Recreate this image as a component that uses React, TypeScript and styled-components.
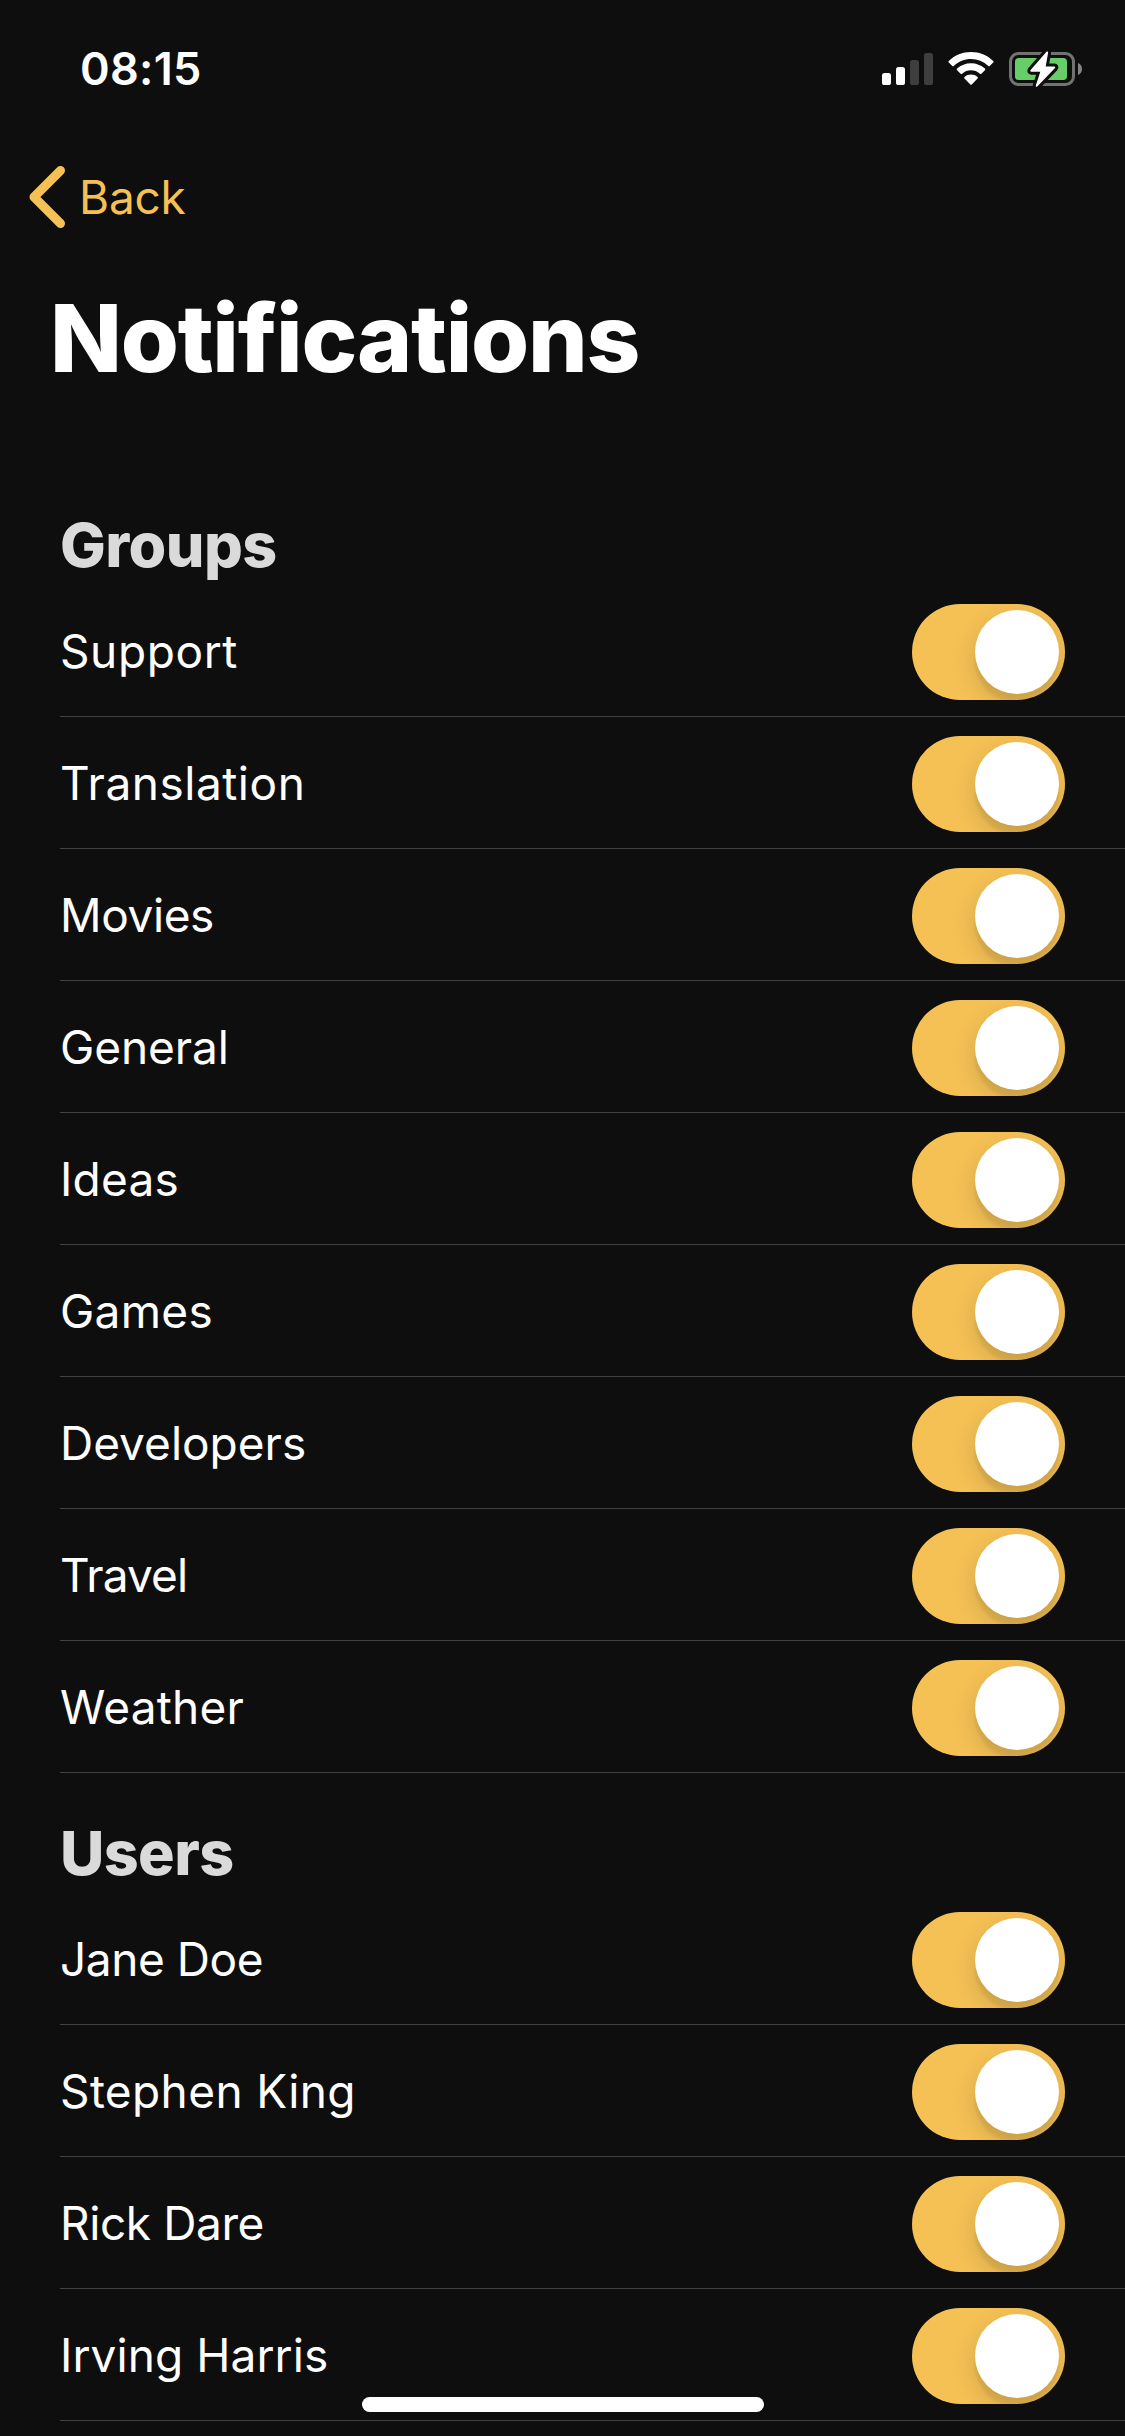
import React from "react";
import styled, { createGlobalStyle } from "styled-components";

const GlobalStyle = createGlobalStyle`
  html, body {
    margin: 0;
    background: #0e0e0e;
  }
  *, *::before, *::after {
    box-sizing: border-box;
  }
`;

const Screen = styled.main`
  position: relative;
  display: flex;
  flex-direction: column;
  width: 1125px;
  height: 2436px;
  overflow: hidden;
  background: #0e0e0e;
  color: #fff;
  font-family: Inter, "Liberation Sans", sans-serif;
`;

const StatusBar = styled.header`
  display: flex;
  flex: none;
  align-items: center;
  justify-content: space-between;
  height: 138px;
  padding: 0 42px 0 80px;
`;

const Clock = styled.time`
  font-size: 45px;
  font-weight: 600;
  line-height: 56px;
  letter-spacing: 0.28px;
`;

const StatusIcons = styled.div`
  display: flex;
  align-items: center;
  gap: 15px;
  height: 36px;
`;

const BackButton = styled.button`
  display: flex;
  flex: none;
  align-items: center;
  align-self: flex-start;
  gap: 14px;
  height: 118px;
  padding: 0 0 0 29px;
  border: 0;
  background: none;
  color: #f5c155;
  font-family: inherit;
  font-size: 46px;
  line-height: 60px;
  letter-spacing: -0.2px;
`;

const Title = styled.h1`
  flex: none;
  margin: 0;
  height: 209px;
  padding: 22px 0 0 50px;
  font-size: 94px;
  font-weight: 800;
  line-height: 120px;
  letter-spacing: -1.25px;
`;

const SectionTitle = styled.h2`
  display: flex;
  flex: none;
  align-items: flex-end;
  height: 120px;
  margin: 0;
  padding: 0 0 2px 60px;
  color: #dadada;
  font-size: 61px;
  font-weight: 800;
  line-height: 76px;
  letter-spacing: -0.6px;
`;

const List = styled.ul`
  flex: none;
  margin: 0 0 0 60px;
  padding: 0;
  list-style: none;
`;

const Row = styled.li`
  display: flex;
  align-items: center;
  justify-content: space-between;
  height: 132px;
  padding: 3px 60px 0 0;
  border-bottom: 1px solid #424242;
`;

const Label = styled.span<{ $tracking: number }>`
  padding-bottom: 2px;
  font-size: 46px;
  line-height: 60px;
  letter-spacing: ${(p) => p.$tracking}px;
  white-space: nowrap;
`;

const Switch = styled.span`
  display: flex;
  align-items: center;
  justify-content: flex-end;
  width: 153px;
  height: 96px;
  padding: 6px;
  overflow: hidden;
  border-radius: 48px;
  background: #f5c155;
`;

const Knob = styled.span`
  width: 84px;
  height: 84px;
  border-radius: 50%;
  background: #fff;
  box-shadow: 0 9px 24px rgba(0, 0, 0, 0.15), 0 9px 3px rgba(0, 0, 0, 0.06);
`;

const HomeIndicator = styled.div`
  position: absolute;
  bottom: 24px;
  left: 362px;
  width: 402px;
  height: 15px;
  border-radius: 8px;
  background: #fff;
`;

const Signal = () => (
  <svg width="51" height="36" viewBox="0 0 51 36">
    <rect x="0" y="22" width="9" height="12" rx="2.6" fill="#fff" />
    <rect x="14" y="16" width="9" height="18" rx="2.6" fill="#fff" />
    <rect x="28" y="9" width="9" height="25" rx="2.6" fill="#3e3e3e" />
    <rect x="42" y="2" width="9" height="32" rx="2.6" fill="#3e3e3e" />
  </svg>
);

const Wifi = () => (
  <svg width="46" height="36" viewBox="0 0 46 36" fill="#fff">
    <path d="M23 1c8.400 0 16.200 3.200 22.200 8.900.5.4.5 1.100 0 1.600l-3.500 3.500c-.4.4-1.100.4-1.500 0A25.100 25.100 0 0 0 23 8.100c-6.400 0-12.400 2.400-17.200 6.900-.4.4-1.100.4-1.500 0L.8 11.500c-.5-.5-.5-1.200 0-1.600C6.800 4.200 14.600 1 23 1z" />
    <path d="M23 12.300c5.200 0 10.100 1.900 13.900 5.300.5.4.5 1.200 0 1.600l-3.500 3.500c-.4.4-1.100.4-1.500 0a13.500 13.500 0 0 0-17.800 0c-.4.400-1.100.4-1.500 0l-3.500-3.500c-.5-.4-.5-1.200 0-1.600 3.800-3.400 8.700-5.300 13.900-5.300z" />
    <path d="M23 23.600c2.400 0 4.700.8 6.500 2.300.5.4.5 1.100 0 1.600l-5.700 5.900c-.4.4-1.100.4-1.500 0l-5.800-5.900c-.4-.5-.4-1.200.1-1.600 1.800-1.500 4.100-2.300 6.400-2.300z" />
  </svg>
);

const Battery = () => (
  <svg width="74" height="36" viewBox="0 0 74 36" overflow="visible">
    <rect x="1.500" y="2.500" width="63" height="31" rx="8" fill="none" stroke="#727272" strokeWidth="3" />
    <path d="M69 12c2.500 1 4 3.100 4 6s-1.500 5-4 6z" fill="#858585" />
    <rect x="6" y="7" width="52" height="22" rx="3.800" fill="#67ce67" />
    <path
      d="M37.300 1 21.600 19c-.6.8-.3 1.700.7 1.700h9L26.800 34.400c-.3 1.200.9 1.800 1.700.9L46 17.100c.7-.8.300-1.700-.7-1.700h-8.600L39.100 1.800c.2-1.200-1-1.700-1.800-.8z"
      fill="#fff"
      stroke="#0e0e0e"
      strokeWidth="6"
      strokeLinejoin="round"
      paintOrder="stroke"
    />
  </svg>
);

const Chevron = () => (
  <svg width="36" height="64" viewBox="0 0 36 64">
    <path d="M31.500 5.500 5 32l26.500 26.500" fill="none" stroke="currentColor" strokeWidth="9" strokeLinecap="round" strokeLinejoin="round" />
  </svg>
);

type Item = { name: string; tracking: number };

const sections: { title: string; items: Item[] }[] = [
  {
    title: "Groups",
    items: [
      { name: "Support", tracking: 0.6 },
      { name: "Translation", tracking: 0.52 },
      { name: "Movies", tracking: -0.4 },
      { name: "General", tracking: -0.1 },
      { name: "Ideas", tracking: 0.2 },
      { name: "Games", tracking: 0.3 },
      { name: "Developers", tracking: 0 },
      { name: "Travel", tracking: -0.85 },
      { name: "Weather", tracking: 0.24 },
    ],
  },
  {
    title: "Users",
    items: [
      { name: "Jane Doe", tracking: -0.45 },
      { name: "Stephen King", tracking: 0.38 },
      { name: "Rick Dare", tracking: -0.4 },
      { name: "Irving Harris", tracking: 0.08 },
    ],
  },
];

export default function App() {
  return (
    <>
      <GlobalStyle />
      <Screen>
        <StatusBar>
          <Clock>08:15</Clock>
          <StatusIcons>
            <Signal />
            <Wifi />
            <Battery />
          </StatusIcons>
        </StatusBar>
        <BackButton>
          <Chevron />
          Back
        </BackButton>
        <Title>Notifications</Title>
        {sections.map((section) => (
          <React.Fragment key={section.title}>
            <SectionTitle>{section.title}</SectionTitle>
            <List>
              {section.items.map((item) => (
                <Row key={item.name}>
                  <Label $tracking={item.tracking}>{item.name}</Label>
                  <Switch role="switch" aria-checked="true">
                    <Knob />
                  </Switch>
                </Row>
              ))}
            </List>
          </React.Fragment>
        ))}
        <HomeIndicator />
      </Screen>
    </>
  );
}
